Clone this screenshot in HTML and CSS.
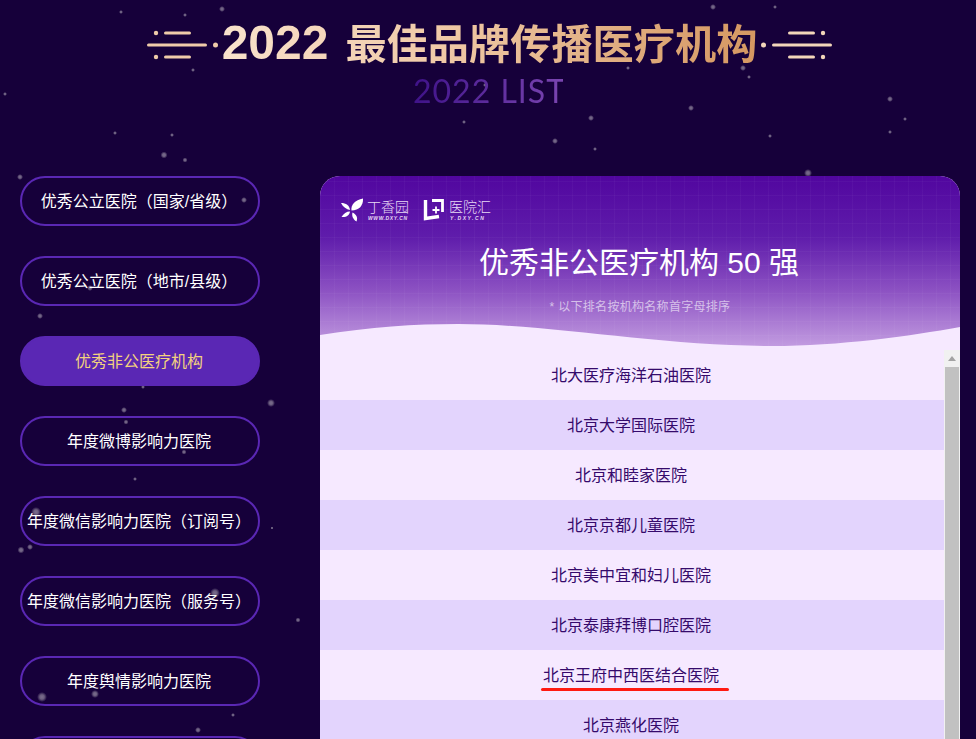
FILE: index.html
```html
<!DOCTYPE html>
<html lang="zh-CN">
<head>
	<meta charset="utf-8">
	<meta name="viewport" content="width=device-width, initial-scale=1">
	<title>2022 最佳品牌传播医疗机构</title>
	<link rel="stylesheet" href="styles.css">
</head>
<body>
<div class="page">

<!-- star field behind everything -->
<svg class="stars" width="976" height="739" viewBox="0 0 976 739">
	<defs>
		<radialGradient id="star">
			<stop offset="0" stop-color="#a79db3"/>
			<stop offset="0.45" stop-color="#8f859c"/>
			<stop offset="1" stop-color="#8f859c" stop-opacity="0"/>
		</radialGradient>
	</defs>
	<g fill="url(#star)">
		<circle cx="121" cy="12" r="2"/><circle cx="185" cy="15" r="2"/><circle cx="222" cy="9" r="3"/>
		<circle cx="713" cy="7" r="3"/><circle cx="775" cy="7" r="2"/><circle cx="5" cy="94" r="2"/>
		<circle cx="193" cy="70" r="2"/><circle cx="628" cy="68" r="2"/><circle cx="743" cy="68" r="3"/>
		<circle cx="749" cy="77" r="2"/><circle cx="485" cy="85" r="2"/><circle cx="890" cy="99" r="3"/>
		<circle cx="691" cy="108" r="3"/><circle cx="591" cy="118" r="3"/><circle cx="464" cy="122" r="2"/>
		<circle cx="905" cy="119" r="2"/><circle cx="115" cy="133" r="2"/><circle cx="172" cy="135" r="2"/>
		<circle cx="770" cy="136" r="2"/><circle cx="890" cy="132" r="2"/><circle cx="555" cy="141" r="3"/>
		<circle cx="595" cy="149" r="2"/><circle cx="164" cy="155" r="3.500"/><circle cx="185" cy="160" r="2.500"/>
		<circle cx="808" cy="173" r="4"/><circle cx="20" cy="177" r="3"/><circle cx="244" cy="200" r="3"/>
		<circle cx="90" cy="288" r="3"/><circle cx="40" cy="316" r="3"/><circle cx="143" cy="387" r="2"/>
		<circle cx="124" cy="410" r="3"/><circle cx="126" cy="422" r="2.500"/><circle cx="271" cy="403" r="4"/>
		<circle cx="184" cy="452" r="2.500"/><circle cx="135" cy="479" r="2"/><circle cx="36" cy="512" r="5"/>
		<circle cx="30" cy="547" r="3"/><circle cx="21" cy="550" r="3.500"/><circle cx="272" cy="528" r="1.500"/>
		<circle cx="215" cy="593" r="5"/><circle cx="298" cy="620" r="2.500"/><circle cx="42" cy="697" r="5"/>
		<circle cx="95" cy="694" r="4"/><circle cx="233" cy="715" r="2"/><circle cx="198" cy="730" r="3"/>
	</g>
</svg>

<header class="top">
	<div class="top-title">
		<svg class="deco" width="72" height="30" viewBox="0 0 72 30">
			<circle cx="9" cy="3" r="2.200"/><rect x="17" y="1.500" width="27" height="3" rx="1.500"/>
			<rect x="0" y="13.500" width="60" height="3" rx="1.500"/>
			<circle cx="68.500" cy="15" r="2.500"/>
			<circle cx="9" cy="27" r="2.200"/><rect x="17" y="25.500" width="27" height="3" rx="1.500"/>
		</svg>
		<h1><span class="year">2022</span><span class="name">最佳品牌传播医疗机构</span></h1>
		<svg class="deco flip" width="72" height="30" viewBox="0 0 72 30">
			<circle cx="9" cy="3" r="2.200"/><rect x="17" y="1.500" width="27" height="3" rx="1.500"/>
			<rect x="0" y="13.500" width="60" height="3" rx="1.500"/>
			<circle cx="68.500" cy="15" r="2.500"/>
			<circle cx="9" cy="27" r="2.200"/><rect x="17" y="25.500" width="27" height="3" rx="1.500"/>
		</svg>
	</div>
	<div class="top-sub">2022 LIST</div>
</header>

<main class="content">
	<nav class="side">
		<a class="side-btn">优秀公立医院（国家/省级）</a>
		<a class="side-btn">优秀公立医院（地市/县级）</a>
		<a class="side-btn active">优秀非公医疗机构</a>
		<a class="side-btn">年度微博影响力医院</a>
		<a class="side-btn">年度微信影响力医院（订阅号）</a>
		<a class="side-btn">年度微信影响力医院（服务号）</a>
		<a class="side-btn">年度舆情影响力医院</a>
		<a class="side-btn"></a>
	</nav>

	<section class="card">
		<div class="card-head">
			<div class="logos">
				<div class="logo">
					<svg width="24" height="24" viewBox="0 0 24 24" fill="#fff">
						<path d="M11.500 12.500C10.500 7 15 2 23 0.500C23.500 7.500 19 12.500 11.500 12.500Z"/>
						<path d="M10 12C6.500 11.500 3 9 1 5C6 5 9.500 7.500 10 12Z"/>
						<path d="M10 13.500C6.500 13.500 3.500 15.500 1.500 19C6.500 19.500 9.500 17 10 13.500Z"/>
						<path d="M12.500 14.500C11.500 17.500 13 21.500 16.500 23.500C18 19.500 16.500 16.500 12.500 14.500Z"/>
					</svg>
					<div class="logo-text">
						<span class="logo-name">丁香园</span>
						<span class="logo-url">WWW.DXY.CN</span>
					</div>
				</div>
				<div class="logo">
					<svg width="22" height="24" viewBox="0 0 22 24" fill="none" stroke="#fff">
						<path d="M2.500 2V20.500L16 18.500" stroke-width="3.400"/>
						<path d="M9 2.500H19.500V14" stroke-width="2.800"/>
						<path d="M13 8.500V15.500M9.500 12H16.500" stroke-width="1.800"/>
					</svg>
					<div class="logo-text">
						<span class="logo-name">医院汇</span>
						<span class="logo-url wide">Y.DXY.CN</span>
					</div>
				</div>
			</div>
			<h2>优秀非公医疗机构 50 强</h2>
			<p class="note">* 以下排名按机构名称首字母排序</p>
			<svg class="wave" viewBox="0 0 640 30" preserveAspectRatio="none">
				<path d="M0 15C50 7 95 4 138 4C230 4 340 26 452 26C520 26 590 16 640 7V30H0Z"/>
			</svg>
		</div>

		<div class="list-wrap">
			<ul class="list">
				<li>北大医疗海洋石油医院</li>
				<li>北京大学国际医院</li>
				<li>北京和睦家医院</li>
				<li>北京京都儿童医院</li>
				<li>北京美中宜和妇儿医院</li>
				<li>北京泰康拜博口腔医院</li>
				<li class="marked">北京王府中西医结合医院</li>
				<li>北京燕化医院</li>
			</ul>
			<div class="scrollbar">
				<span class="arrow"></span>
				<span class="thumb"></span>
			</div>
		</div>
	</section>
</main>

</div>
</body>
</html>
```

FILE: styles.css
```css
html, *, *::before,
*::after{
	box-sizing: border-box;
}
body{
	margin: 0;
	background: #16003a;
	font-family: "Liberation Sans", "Noto Sans CJK SC", sans-serif;
}
.page{
	position: relative;
	height: 739px;
	overflow: hidden;
	background: #16003a;
}
.stars{
	position: absolute;
	left: 0;
	top: 0;
	opacity: 0.7;
}

/* top title */
.top{
	position: relative;
	height: 176px;
	padding-top: 20px;
	text-align: center;
}
.top-title{
	display: flex;
	justify-content: center;
	align-items: center;
	gap: 3px;
	height: 50px;
	padding-left: 3px;
}
.top-title h1{
	margin: 0;
	line-height: 50px;
	font-weight: 700;
	white-space: nowrap;
	color: transparent;
	background: linear-gradient(90deg, #f9e2cc 0%, #f0caa8 40%, #d59761 100%);
	-webkit-background-clip: text;
	background-clip: text;
}
.year{
	font-size: 48px;
}
.name{
	margin-left: 17px;
	font-size: 41.200px;
}
.deco{
	flex: none;
	fill: #efcba9;
}
.deco.flip{
	transform: scaleX(-1);
	fill: #f3d6ba;
}
.top-sub{
	width: 150px;
	margin: 1px auto 0;
	font-family: "Lato", "Liberation Sans", sans-serif;
	font-size: 32px;
	line-height: 40px;
	letter-spacing: 1px;
	font-weight: 400;
	white-space: nowrap;
	color: transparent;
	background: linear-gradient(90deg, #3f1289 0%, #7a45b0 100%);
	-webkit-background-clip: text;
	background-clip: text;
}

.content{
	position: relative;
	display: flex;
	align-items: flex-start;
	padding: 0 16px 0 20px;
	gap: 60px;
}

/* left buttons */
.side{
	display: flex;
	flex-direction: column;
	gap: 30px;
	width: 240px;
	flex: none;
}
.side-btn{
	display: flex;
	align-items: center;
	justify-content: center;
	height: 50px;
	padding: 0 2px 3px 0;
	border: 2px solid #5a27b4;
	border-radius: 25px;
	color: #fff;
	font-size: 16px;
	white-space: nowrap;
	cursor: pointer;
}
.side-btn.active{
	background: #5a27b4;
	color: #f3d27e;
}

/* card */
.card{
	width: 640px;
	flex: none;
	border-radius: 20px 20px 0 0;
	overflow: hidden;
	background: #f6e9ff;
}
.card-head{
	position: relative;
	height: 174px;
	padding: 22px 0 0 20px;
	background:
		repeating-linear-gradient(90deg, rgba(255, 255, 255, 0.03) 0 1px, transparent 1px 14px),
		repeating-linear-gradient(0deg, rgba(255, 255, 255, 0.03) 0 1px, transparent 1px 14px),
		linear-gradient(180deg, #51069f 0%, #5f1cab 35%, #8b50c2 65%, #c5a0e2 100%);
	color: #fff;
}
.logos{
	display: flex;
	gap: 14px;
	height: 24px;
}
.logo{
	display: flex;
	align-items: center;
	gap: 3px;
}
.logo + .logo{
	gap: 4px;
}
.logo-text{
	display: flex;
	flex-direction: column;
	align-items: flex-start;
	color: #e8daf5;
}
.logo-name{
	font-size: 14px;
	line-height: 16px;
	font-weight: 300;
}
.logo-url{
	padding-left: 1px;
	font-size: 5px;
	line-height: 6px;
	font-weight: 700;
	font-style: italic;
	letter-spacing: 0.6px;
}
.logo-url.wide{
	letter-spacing: 1.600px;
}
.card-head h2{
	margin: 20px 0 0 -22px;
	font-size: 30px;
	line-height: 42px;
	font-weight: 400;
	text-align: center;
}
.note{
	margin: 14px 0 0 -20px;
	font-size: 12px;
	line-height: 18px;
	letter-spacing: 0.3px;
	text-align: center;
	color: rgba(255, 255, 255, 0.6);
}
.wave{
	position: absolute;
	left: 0;
	bottom: 0;
	width: 100%;
	height: 30px;
	fill: #f6e9ff;
}

/* list */
.list-wrap{
	display: flex;
	align-items: stretch;
}
.list{
	flex: 1;
	margin: 0;
	padding: 0;
	list-style: none;
}
.list li{
	position: relative;
	height: 50px;
	padding-right: 2px;
	line-height: 51px;
	text-align: center;
	font-size: 16px;
	color: #350a6b;
}
.list li:nth-child(even){
	background: #e3d4fd;
}
.list li.marked::after{
	content: "";
	position: absolute;
	left: 221px;
	top: 38px;
	width: 188px;
	height: 3px;
	border-radius: 2px;
	background: #ff1a12;
}
.scrollbar{
	position: relative;
	width: 16px;
	flex: none;
	background: #f1f1f1;
}
.arrow{
	position: absolute;
	left: 4px;
	top: 6px;
	border: 4px solid transparent;
	border-top: 0;
	border-bottom: 5px solid #a3a3a3;
}
.thumb{
	position: absolute;
	left: 1px;
	top: 17px;
	bottom: 0;
	width: 14px;
	background: #c1c1c1;
}
```
